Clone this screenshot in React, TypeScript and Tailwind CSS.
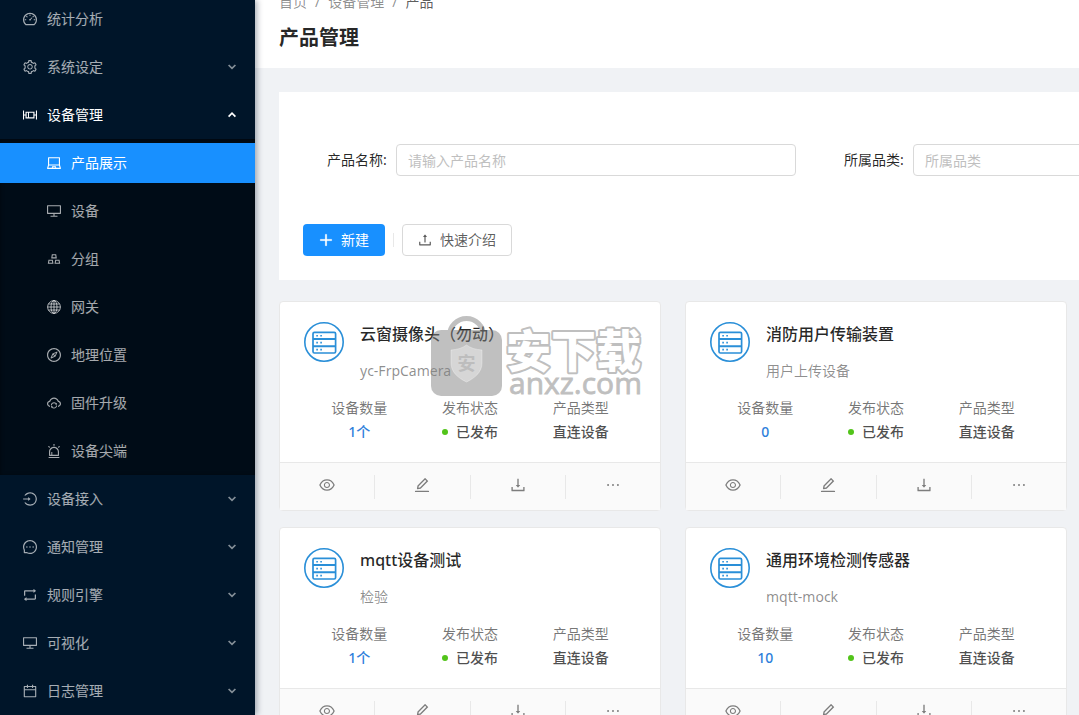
import type { ReactNode } from 'react'
import type { IconType } from 'react-icons'
import {
  AiOutlineAlert,
  AiOutlineBoxPlot,
  AiOutlineCalendar,
  AiOutlineCloudSync,
  AiOutlineCompass,
  AiOutlineDashboard,
  AiOutlineDesktop,
  AiOutlineDownload,
  AiOutlineEdit,
  AiOutlineEllipsis,
  AiOutlineEye,
  AiOutlineGold,
  AiOutlineLaptop,
  AiOutlineLogin,
  AiOutlineMessage,
  AiOutlinePlus,
  AiOutlineRetweet,
  AiOutlineSetting,
  AiOutlineUpload,
} from 'react-icons/ai'

interface MenuItem {
  label: string
  icon: IconType
  active?: boolean
  children?: MenuItem[]
  leaf?: boolean
}

interface Product {
  name: string
  desc: string
  count: string
}

function GlobeIcon({ className }: { className?: string }) {
  return (
    <svg className={className} viewBox="-1 -1 16 16" fill="none" stroke="currentColor" strokeWidth="1">
      <circle cx="7" cy="7" r="6.4" />
      <ellipse cx="7" cy="7" rx="3" ry="6.4" />
      <path d="M7 .6v12.8M.6 7h12.8M1.4 4h11.2M1.4 10h11.2" />
    </svg>
  )
}

const MENU: MenuItem[] = [
  { label: '统计分析', icon: AiOutlineDashboard, leaf: true },
  { label: '系统设定', icon: AiOutlineSetting },
  {
    label: '设备管理',
    icon: AiOutlineBoxPlot,
    children: [
      { label: '产品展示', icon: AiOutlineLaptop, active: true },
      { label: '设备', icon: AiOutlineDesktop },
      { label: '分组', icon: AiOutlineGold },
      { label: '网关', icon: GlobeIcon },
      { label: '地理位置', icon: AiOutlineCompass },
      { label: '固件升级', icon: AiOutlineCloudSync },
      { label: '设备尖端', icon: AiOutlineAlert },
    ],
  },
  { label: '设备接入', icon: AiOutlineLogin },
  { label: '通知管理', icon: AiOutlineMessage },
  { label: '规则引擎', icon: AiOutlineRetweet },
  { label: '可视化', icon: AiOutlineDesktop },
  { label: '日志管理', icon: AiOutlineCalendar },
]

const PRODUCTS: Product[] = [
  { name: '云窗摄像头（勿动）', desc: 'yc-FrpCamera', count: '1个' },
  { name: '消防用户传输装置', desc: '用户上传设备', count: '0' },
  { name: 'mqtt设备测试', desc: '检验', count: '1个' },
  { name: '通用环境检测传感器', desc: 'mqtt-mock', count: '10' },
]

const ACTIONS = [
  { label: '查看', icon: AiOutlineEye },
  { label: '编辑', icon: AiOutlineEdit },
  { label: '下载', icon: AiOutlineDownload },
  { label: '更多', icon: AiOutlineEllipsis },
]

function Chevron({ up }: { up?: boolean }) {
  return (
    <svg
      className={`ml-auto h-2 w-2 ${up ? '' : 'opacity-80'}`}
      viewBox="0 0 8 8"
      fill="none"
      stroke="currentColor"
      strokeWidth="1.7"
    >
      <path d={up ? 'M.6 5.6 4 2.2l3.4 3.4' : 'M.6 2 4 5.4 7.4 2'} />
    </svg>
  )
}

function Sidebar() {
  return (
    <aside className="relative z-10 w-[255px] shrink-0 overflow-hidden bg-[#001529] shadow-[2px_0_6px_rgba(0,21,41,0.35)]">
      <ul className="-mt-px flex flex-col gap-2">
        {MENU.map((item) => (
          <li key={item.label} className="flex flex-col gap-2">
            <button
              className={`flex h-10 w-full items-center gap-[9px] pr-[19px] pl-[22px] ${
                item.children ? 'text-white' : 'text-white/65'
              }`}
            >
              <item.icon className="h-4 w-4 shrink-0" />
              <span>{item.label}</span>
              {!item.leaf && <Chevron up={!!item.children} />}
            </button>
            {item.children && (
              <ul className="-my-1 flex flex-col gap-2 bg-[#000c17] py-1 shadow-[inset_0_1px_4px_rgba(0,0,0,0.45)]">
                {item.children.map((sub) => (
                  <li key={sub.label}>
                    <a
                      href="#"
                      className={`flex h-10 items-center gap-[9px] pl-[46px] ${
                        sub.active ? 'bg-[#1890ff] text-white' : 'text-white/65'
                      }`}
                    >
                      <sub.icon className="h-4 w-4 shrink-0" />
                      <span>{sub.label}</span>
                    </a>
                  </li>
                ))}
              </ul>
            )}
          </li>
        ))}
      </ul>
    </aside>
  )
}

function Field({ id, label, placeholder }: { id: string; label: string; placeholder: string }) {
  return (
    <div className="flex min-w-[469px] flex-1 items-center">
      <label htmlFor={id} className="w-[69px] shrink-0 text-black/85">
        {label}:
      </label>
      <input
        id={id}
        placeholder={placeholder}
        className="h-8 min-w-0 flex-1 rounded border border-[#d9d9d9] px-[11px] outline-none placeholder:text-[#bfbfbf]"
      />
    </div>
  )
}

function SearchPanel() {
  return (
    <section className="ml-6 overflow-hidden bg-white px-6 pt-[52px] pb-6">
      <form className="flex gap-12 pl-6">
        <Field id="name" label="产品名称" placeholder="请输入产品名称" />
        <Field id="category" label="所属品类" placeholder="所属品类" />
      </form>
      <div className="mt-12 flex items-center gap-2">
        <button className="flex h-8 items-center gap-[7px] rounded bg-[#1890ff] pr-4 pl-[15px] text-white">
          <AiOutlinePlus className="h-4 w-4" strokeWidth="40" />
          新建
        </button>
        <span className="h-3.5 w-px bg-[#e8e8e8]" />
        <button className="flex h-8 items-center gap-[7px] rounded border border-[#d9d9d9] pr-[15px] pl-3.5 text-black/65">
          <AiOutlineUpload className="h-4 w-4" />
          快速介绍
        </button>
      </div>
    </section>
  )
}

function DeviceLogo() {
  return (
    <svg className="h-10 w-10 shrink-0" viewBox="0 0 40 40" fill="none" stroke="#2a8fd8">
      <circle cx="20" cy="20" r="19.2" strokeWidth="1.6" />
      <rect x="9" y="10.4" width="22.6" height="20.6" rx="1.4" strokeWidth="1.7" />
      <path d="M9 17h22.6M9 24.2h22.6" strokeWidth="1.9" />
      <path d="M12.3 13.8h1.6M16.3 13.8h1.6M12.3 20.6h1.6M16.3 20.6h1.6M12.3 27.6h1.6M16.3 27.6h1.6" strokeWidth="1.6" />
    </svg>
  )
}

function Stat({ label, children }: { label: string; children: ReactNode }) {
  return (
    <div className="flex-1 text-center leading-6">
      <p className="text-black/55">{label}</p>
      {children}
    </div>
  )
}

function ProductCard({ product }: { product: Product }) {
  return (
    <article className="rounded-sm border border-[#e8e8e8] bg-white">
      <div className="px-6 pt-5 pb-[18px]">
        <div className="flex gap-4">
          <DeviceLogo />
          <div>
            <h2 className="text-base leading-6 font-medium text-black/85">{product.name}</h2>
            <p className="mt-[13px] leading-6 text-black/45">{product.desc}</p>
          </div>
        </div>
        <div className="mt-[13px] flex">
          <Stat label="设备数量">
            <p className="font-medium text-[#2f7fdb]">{product.count}</p>
          </Stat>
          <Stat label="发布状态">
            <p className="flex items-center justify-center gap-2 font-medium text-black/70">
              <span className="h-1.5 w-1.5 rounded-full bg-[#52c41a]" />
              已发布
            </p>
          </Stat>
          <Stat label="产品类型">
            <p className="font-medium text-black/70">直连设备</p>
          </Stat>
        </div>
      </div>
      <div className="flex divide-x divide-[#e8e8e8] border-t border-[#e8e8e8] bg-[#fafafa] pt-3 pb-[11px]">
        {ACTIONS.map(({ label, icon: Icon }) => (
          <button key={label} aria-label={label} className="flex h-6 flex-1 justify-center pt-px text-black/50">
            <Icon className="h-[18px] w-[18px]" />
          </button>
        ))}
      </div>
    </article>
  )
}

function Watermark() {
  return (
    <svg
      className="pointer-events-none absolute top-[312px] left-[428px] z-20 h-[90px] w-[220px]"
      viewBox="0 0 220 90"
      aria-hidden="true"
    >
      <g opacity="0.5">
        <path d="M21.5 23.5a17 17 0 0 1 34 0" fill="none" stroke="#838383" strokeWidth="5" />
        <rect x="3" y="18" width="71" height="66" rx="10" fill="#838383" />
      </g>
      <path
        d="M38.5 33c4 3 9 4.5 15.5 5v13c0 9-7 15-15.5 19C30 66 23 60 23 51V38c6.5-.5 11.5-2 15.500-5z"
        fill="#fff"
        fillOpacity="0.35"
        stroke="#fff"
        strokeOpacity="0.3"
      />
      <text
        x="38.5"
        y="58"
        textAnchor="middle"
        fontSize="18"
        fontWeight="700"
        fill="#bdbdbd"
        fontFamily="'Noto Sans CJK SC', sans-serif"
      >
        安
      </text>
      <text
        x="78"
        y="56"
        fontSize="45"
        fontWeight="900"
        fill="#fff"
        stroke="#bfbfbf"
        strokeWidth="4"
        strokeLinejoin="round"
        paintOrder="stroke"
        fontFamily="'Noto Sans CJK SC', sans-serif"
      >
        安下载
      </text>
      <text
        x="81"
        y="82"
        fontSize="30"
        fontWeight="500"
        fill="#bfbfbf"
        stroke="#bfbfbf"
        strokeWidth="0.8"
        fontFamily="'Open Sans', 'Noto Sans', sans-serif"
      >
        anxz.com
      </text>
    </svg>
  )
}

export default function App() {
  return (
    <div className="relative flex h-screen overflow-hidden bg-[#f0f2f5] font-['Noto_Sans','Noto_Sans_CJK_SC',sans-serif] text-sm text-black/65">
      <Sidebar />
      <main className="min-w-0 flex-1">
        <header className="-mt-[9px] bg-white pb-3.5 pl-6">
          <nav className="flex gap-2 leading-[22px] text-black/45">
            <a href="#">首页</a>
            <span>/</span>
            <a href="#">设备管理</a>
            <span>/</span>
            <span className="text-black/65">产品</span>
          </nav>
          <h1 className="mt-[9px] text-xl leading-8 font-bold text-black/85">产品管理</h1>
        </header>
        <div className="pt-6">
          <SearchPanel />
          <div className="mt-[21px] grid grid-cols-2 gap-x-6 gap-y-4 pr-3 pl-6">
            {PRODUCTS.map((product) => (
              <ProductCard key={product.name} product={product} />
            ))}
          </div>
        </div>
      </main>
      <Watermark />
    </div>
  )
}
